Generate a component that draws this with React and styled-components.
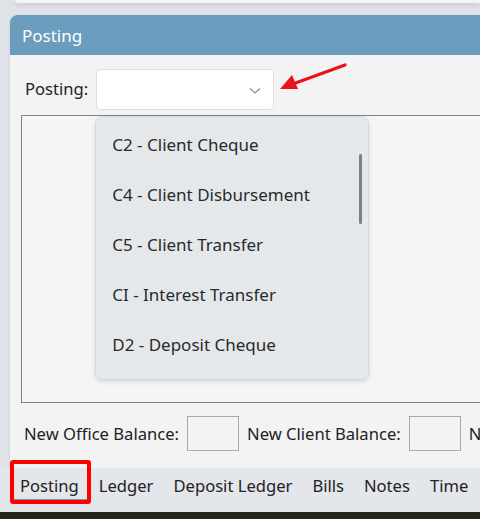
import styled, { createGlobalStyle } from 'styled-components'

const GlobalStyle = createGlobalStyle`
    html, body {
        margin: 0;
        padding: 0;
    }
    body {
        font-family: "Noto Sans", "Open Sans", sans-serif;
        color: #222;
    }
`

const options = [
    'C2 - Client Cheque',
    'C4 - Client Disbursement',
    'C5 - Client Transfer',
    'CI - Interest Transfer',
    'D2 - Deposit Cheque',
]

const tabs = ['Posting', 'Ledger', 'Deposit Ledger', 'Bills', 'Notes', 'Time']

function App() {
    return (
        <Page>
            <GlobalStyle />
            <TopCard />
            <Panel>
                <Header>Posting</Header>
                <Body>
                    <PostingRow>
                        <PostingLabel>Posting:</PostingLabel>
                        <SelectWrap>
                            <Select>
                                <svg width="12" height="8" viewBox="0 0 12 8">
                                    <path d="M1 1.5 L6 6 L11 1.5" fill="none" stroke="#8a8f96" strokeWidth="1.2" />
                                </svg>
                            </Select>
                            <Pointer width="80" height="40" viewBox="0 0 80 40">
                                <path d="M69 6 L14 26" stroke="#e8141a" strokeWidth="3.2" strokeLinecap="round" />
                                <path d="M4 30 L16 16 L22 30 Z" fill="#e8141a" />
                            </Pointer>
                            <Dropdown>
                                {options.map((o) => (
                                    <Option key={o}>{o}</Option>
                                ))}
                                <Scroll />
                            </Dropdown>
                        </SelectWrap>
                    </PostingRow>
                    <Frame />
                    <BalanceRow>
                        <Label>New Office Balance:</Label>
                        <BalanceBox />
                        <Label>New Client Balance:</Label>
                        <BalanceBox />
                        <Label>New Deposit Balance:</Label>
                    </BalanceRow>
                </Body>
            </Panel>
            <TabBar>
                {tabs.map((t, i) => (
                    <Tab key={t} $active={i === 0}>{t}</Tab>
                ))}
                <Highlight />
            </TabBar>
            <Taskbar />
        </Page>
    )
}

const Page = styled.div`
    width: 480px;
    height: 519px;
    overflow: hidden;
    background: #dfe3e8;
    display: flex;
    flex-direction: column;
`

const TopCard = styled.div`
    margin-left: 15px;
    height: 3px;
    flex-shrink: 0;
    background: #f4f4f4;
    border-radius: 0 0 0 4px;
    box-shadow: 0 2px 4px rgba(0, 0, 0, 0.12);
`

const Panel = styled.div`
    margin-top: 12px;
    margin-left: 10px;
    width: 520px;
    display: flex;
    flex-direction: column;
    box-shadow: 0 1px 3px rgba(0, 0, 0, 0.1);
    border-radius: 8px 0 0 0;
`

const Header = styled.div`
    height: 40px;
    background: #6a9dbd;
    color: #fff;
    font-size: 17px;
    line-height: 42px;
    padding-left: 12px;
    border-radius: 8px 0 0 0;
`

const Body = styled.div`
    background: #f3f3f3;
    padding: 14px 0 17px 11px;
`

const PostingRow = styled.div`
    display: flex;
    align-items: center;
    gap: 8px;
    padding-left: 4px;
`

const Label = styled.span`
    font-size: 16.6px;
    color: #222;
    white-space: nowrap;
`

const PostingLabel = styled(Label)`
    padding-bottom: 3px;
`

const SelectWrap = styled.div`
    position: relative;
`

const Select = styled.div`
    box-sizing: border-box;
    width: 178px;
    height: 41px;
    background: #fff;
    border: 1px solid #e0e0e0;
    border-radius: 4px;
    display: flex;
    align-items: center;
    justify-content: flex-end;
    padding-right: 12px;
    svg {
        margin-top: 2px;
    }
`

const Pointer = styled.svg`
    position: absolute;
    left: 180px;
    top: -10px;
`

const Dropdown = styled.div`
    box-sizing: border-box;
    position: absolute;
    top: 47px;
    left: -1px;
    width: 274px;
    padding: 3px 0 9px;
    background: #e5e8eb;
    border: 1px solid #d3d8de;
    border-radius: 8px;
    box-shadow: 0 2px 5px rgba(0, 0, 0, 0.12);
    z-index: 2;
`

const Option = styled.div`
    height: 50px;
    line-height: 50px;
    padding-left: 16px;
    font-size: 17px;
    color: #2a2a2a;
`

const Scroll = styled.div`
    position: absolute;
    top: 37px;
    right: 6px;
    width: 3px;
    height: 70px;
    border-radius: 2px;
    background: #7f7f7f;
`

const Frame = styled.div`
    margin-top: 5px;
    height: 286px;
    border: 1px solid #7b8796;
    background: #f5f5f5;
`

const BalanceRow = styled.div`
    display: flex;
    align-items: center;
    gap: 8px;
    margin-top: 13px;
    padding-left: 3px;
`

const BalanceBox = styled.div`
    width: 50px;
    height: 33px;
    border: 1px solid #a9a9a9;
    flex-shrink: 0;
`

const TabBar = styled.div`
    position: relative;
    height: 44px;
    flex-shrink: 0;
    display: flex;
    align-items: flex-start;
    padding: 6px 0 0 10px;
    box-sizing: border-box;
    background: #e3e6ea;
`

const Tab = styled.div`
    position: relative;
    padding: 0 10px;
    font-size: 16.6px;
    line-height: 24px;
    color: #222;
    white-space: nowrap;
    &::after {
        content: '';
        display: ${(p) => (p.$active ? 'block' : 'none')};
        position: absolute;
        left: 4px;
        right: 2px;
        top: calc(100% + 1px);
        height: 2px;
        background: #6a9dbd;
    }
`

const Highlight = styled.div`
    position: absolute;
    left: 10px;
    top: -8px;
    width: 73px;
    height: 36px;
    border: 4px solid #f00;
    border-radius: 3px;
`

const Taskbar = styled.div`
    flex: 1;
    background: #21251b;
`

export default App
